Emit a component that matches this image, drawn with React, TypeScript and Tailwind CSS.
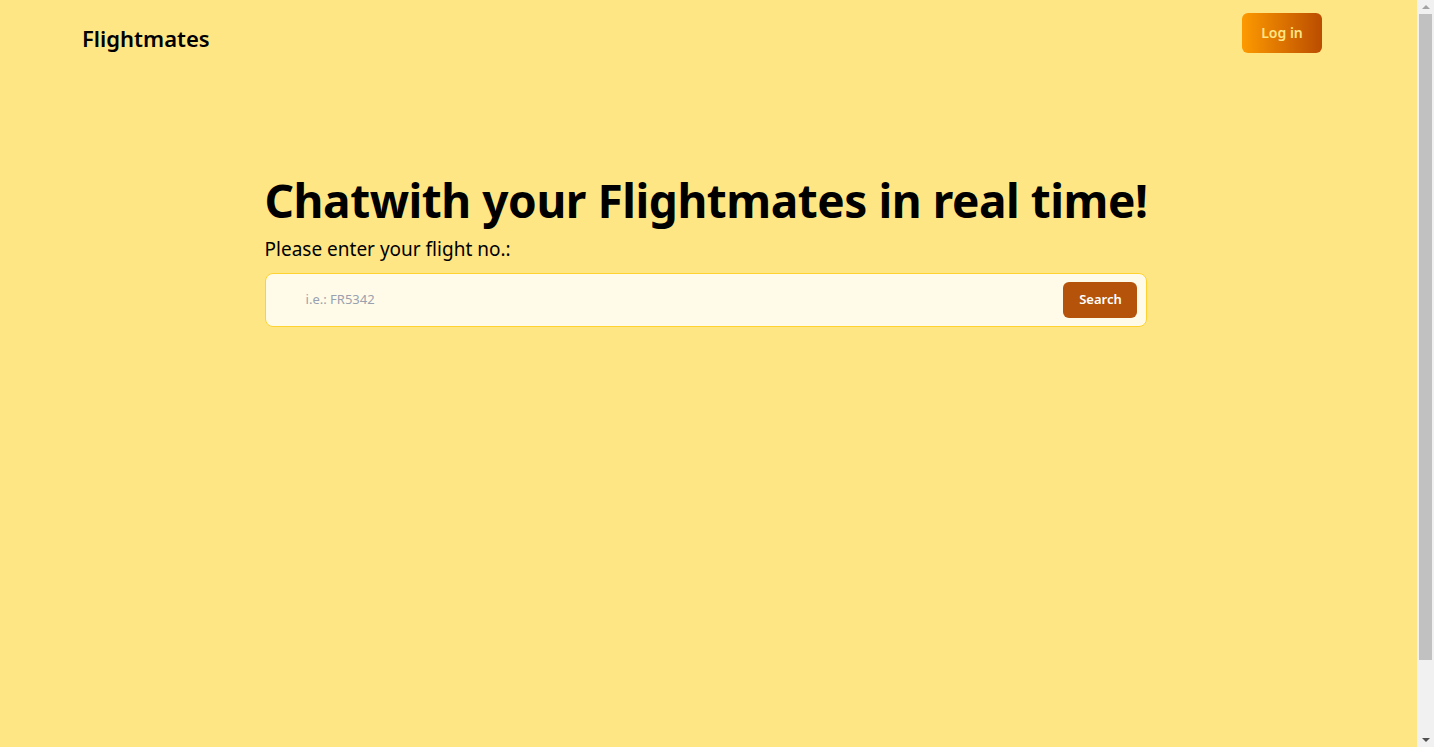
import { useState } from "react";

export default function App() {
  const [flight, setFlight] = useState("");

  return (
    <div className="flex h-screen overflow-hidden bg-amber-200 font-['Noto_Sans',sans-serif] text-black">
      <div className="flex-1">
        <header className="flex h-20 items-start justify-between pl-[82px] pr-[95px]">
          <a href="#" className="mt-[22px] text-[22px] font-semibold leading-8">
            Flightmates
          </a>
          <button className="mt-[13px] h-10 w-20 rounded-md bg-gradient-to-r from-amber-500 to-amber-700 text-sm font-semibold text-amber-200">
            Log in
          </button>
        </header>

        <main className="pr-[5px]">
          <div className="mx-auto mt-[93px] w-fit">
            <h1 className="text-[46px] leading-[54px] font-bold tracking-[-0.01em]">
              Chatwith your Flightmates in real time!
            </h1>
            <p className="mt-[8px] text-[19px]">Please enter your flight no.:</p>
            <form
              onSubmit={(e) => e.preventDefault()}
              className="mt-[9px] flex h-[54px] items-center rounded-lg border border-amber-300 bg-[#fffbe8] pl-10 pr-[9px]"
            >
              <input
                value={flight}
                onChange={(e) => setFlight(e.target.value)}
                placeholder="i.e.: FR5342"
                className="flex-1 bg-transparent text-[13px] text-gray-700 outline-none placeholder:text-gray-400"
              />
              <button
                type="submit"
                className="h-9 w-[74px] rounded-md bg-[#b45309] text-[13px] font-semibold text-white"
              >
                Search
              </button>
            </form>
          </div>
        </main>
      </div>

      {/* scrollbar */}
      <div className="flex w-[17px] shrink-0 flex-col items-center bg-[#f1f1f1]">
        <div className="flex h-[14px] items-center justify-center">
          <div className="h-0 w-0 border-x-[4px] border-b-[4px] border-x-transparent border-b-[#a3a3a3]" />
        </div>
        <div className="h-[646px] w-[13px] bg-[#c1c1c1]" />
        <div className="flex-1" />
        <div className="flex h-[14px] items-center justify-center">
          <div className="h-0 w-0 border-x-[4px] border-t-[4px] border-x-transparent border-t-[#505050]" />
        </div>
      </div>
    </div>
  );
}
